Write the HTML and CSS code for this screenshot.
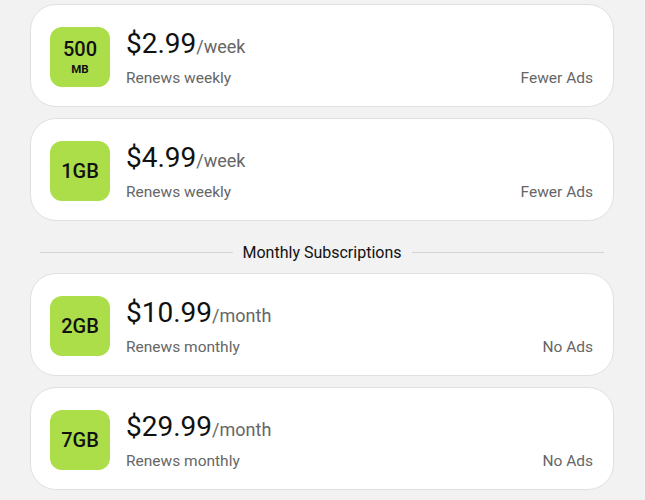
FILE: index.html
```html
<!DOCTYPE html>
<html>
<head>
<meta charset="utf-8">
<link rel="stylesheet" href="styles.css">
</head>
<body>
<div class="list">
  <div class="card">
    <div class="badge"><span class="badge-num">500</span><span class="badge-unit">MB</span></div>
    <div class="info">
      <div class="price"><span class="amount">$2.99</span><span class="period">/week</span></div>
      <div class="sub"><span>Renews weekly</span><span>Fewer Ads</span></div>
    </div>
  </div>
  <div class="card">
    <div class="badge"><span class="badge-num">1GB</span></div>
    <div class="info">
      <div class="price"><span class="amount">$4.99</span><span class="period">/week</span></div>
      <div class="sub"><span>Renews weekly</span><span>Fewer Ads</span></div>
    </div>
  </div>
  <div class="divider"><span class="line"></span><span class="divider-text">Monthly Subscriptions</span><span class="line"></span></div>
  <div class="card">
    <div class="badge"><span class="badge-num">2GB</span></div>
    <div class="info">
      <div class="price"><span class="amount">$10.99</span><span class="period">/month</span></div>
      <div class="sub"><span>Renews monthly</span><span>No Ads</span></div>
    </div>
  </div>
  <div class="card">
    <div class="badge"><span class="badge-num">7GB</span></div>
    <div class="info">
      <div class="price"><span class="amount">$29.99</span><span class="period">/month</span></div>
      <div class="sub"><span>Renews monthly</span><span>No Ads</span></div>
    </div>
  </div>
</div>
</body>
</html>
```

FILE: styles.css
```css
html, body {
  margin: 0;
  padding: 0;
  background: #f2f2f2;
  font-family: Roboto, "Liberation Sans", sans-serif;
  color: #111;
}

.list {
  display: flex;
  flex-direction: column;
  gap: 11px;
  padding: 4px 31px 0 30px;
}

.card {
  display: flex;
  align-items: flex-start;
  gap: 16px;
  background: #fff;
  border: 1px solid #e0e0e0;
  border-radius: 26px;
  padding: 21.5px 20px 18px 19px;
}

.badge {
  flex: 0 0 60px;
  width: 60px;
  height: 60px;
  border-radius: 12px;
  background: #acde4a;
  display: flex;
  flex-direction: column;
  align-items: center;
  justify-content: center;
  color: #111;
}

.badge-num {
  font-size: 20px;
  font-weight: 500;
  line-height: 22px;
}

.badge-unit {
  font-size: 11.5px;
  font-weight: 700;
  line-height: 14px;
  margin-top: 2px;
}

.info {
  flex: 1;
  display: flex;
  flex-direction: column;
  gap: 9.5px;
}

.price {
  font-size: 28px;
  line-height: 33px;
  height: 33px;
  white-space: nowrap;
}

.amount {
  color: #111;
}

.period {
  font-size: 18px;
  line-height: 1;
  color: #666;
}

.sub {
  display: flex;
  justify-content: space-between;
  font-size: 15.5px;
  line-height: 19px;
  color: #666;
}

.divider {
  display: flex;
  align-items: center;
  gap: 10px;
  margin: 0 10px;
  height: 19px;
  margin-top: 11px;
}

.line {
  flex: 1;
  height: 1px;
  background: #d4d4d4;
}

.divider-text {
  font-size: 16px;
  color: #111;
  white-space: nowrap;
}
```
